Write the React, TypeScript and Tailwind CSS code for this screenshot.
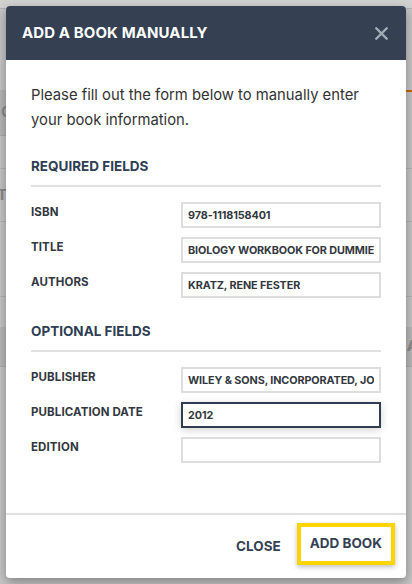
import { X } from 'lucide-react';

const required = [
  { label: 'ISBN', value: '978-1118158401' },
  { label: 'TITLE', value: 'BIOLOGY WORKBOOK FOR DUMMIES' },
  { label: 'AUTHORS', value: 'KRATZ, RENE FESTER' },
];

const optional = [
  { label: 'PUBLISHER', value: 'WILEY & SONS, INCORPORATED, JOHN', focused: false },
  { label: 'PUBLICATION DATE', value: '2012', focused: true },
  { label: 'EDITION', value: '', focused: false },
];

function Field({ label, value, focused }: { label: string; value: string; focused?: boolean }) {
  return (
    <div className="flex items-center h-[26px]">
      <label className="w-[150px] shrink-0 -mt-[4px] text-[11.5px] font-bold text-[#333840] tracking-[0.1px]">{label}</label>
      <input
        readOnly
        value={value}
        className={`w-[200px] h-[26px] px-[5px] text-[10.8px] font-bold text-[#333840] tracking-[-0.1px] bg-white outline-none border-2 ${
          focused ? 'border-[#2f3d52] shadow-[0_2px_8px_rgba(0,0,0,0.18)]' : 'border-[#dddddd]'
        }`}
      />
    </div>
  );
}

function Section({ title }: { title: string }) {
  return (
    <div className="pb-[9px] border-b-2 border-[#e0e0e0]">
      <h3 className="text-[13.5px] font-bold text-[#2f3d52] leading-[20px]">{title}</h3>
    </div>
  );
}

export default function App() {
  return (
    <div className="relative w-[412px] h-[584px] overflow-hidden bg-[#c6c6c6] font-['Inter',sans-serif]">
      {/* dimmed page behind the modal */}
      <div className="flex flex-col text-[#8a8a8a] font-bold text-[15px]">
        <div className="h-[9px] bg-[#d2d2d2] border-b border-[#b4b4b4]" />
        <div className="h-[81px]" />
        <div className="flex h-[46px]">
          <div className="w-[200px] bg-[#b8b8b8] border-b border-[#aeaeae] flex items-center pl-[1px]">C</div>
          <div className="flex-1 border-t-2 border-[#c46a00]" />
        </div>
        <div className="h-[33px] border-b border-[#b4b4b4]" />
        <div className="h-[53px] border-b border-[#b4b4b4] flex items-center -ml-[3px]">T</div>
        <div className="h-[75px] border-b border-[#b4b4b4]" />
        <div className="h-[30px]" />
        <div className="h-[40px] bg-[#b9b9b9] border-b border-[#aeaeae] flex items-center justify-end pr-0 -mr-[6px]">A</div>
      </div>

      {/* modal */}
      <div className="absolute left-[6px] top-[6px] w-[400px] h-[572px] flex flex-col bg-white rounded-[4px] overflow-hidden shadow-[0_4px_12px_rgba(0,0,0,0.35)]">
        <div className="h-[54px] shrink-0 bg-[#354153] flex items-center justify-between pl-[16px] pr-[14px]">
          <h2 className="text-[15px] font-bold text-white tracking-[0.1px]">ADD A BOOK MANUALLY</h2>
          <X className="w-[21px] h-[21px] text-[#a4acb8]" strokeWidth={2.8} />
        </div>

        <div className="flex-1 px-[25px] pt-[23px]">
          <p className="text-[14.8px] leading-[25px] text-[#333333]">
            Please fill out the form below to manually enter your book information.
          </p>

          <div className="mt-[23px]">
            <Section title="REQUIRED FIELDS" />
          </div>
          <div className="mt-[15px] flex flex-col gap-[9px]">
            {required.map((f) => (
              <Field key={f.label} label={f.label} value={f.value} />
            ))}
          </div>

          <div className="mt-[23px]">
            <Section title="OPTIONAL FIELDS" />
          </div>
          <div className="mt-[15px] flex flex-col gap-[9px]">
            {optional.map((f) => (
              <Field key={f.label} label={f.label} value={f.value} focused={f.focused} />
            ))}
          </div>
        </div>

        <div className="h-[65px] shrink-0 border-t-2 border-[#e0e0e0] flex items-center justify-end gap-[16px] pr-[11px] pb-[6px]">
          <button className="text-[13.5px] font-bold text-[#354153] mt-[6px]">CLOSE</button>
          <button className="h-[42px] px-[9px] border-[4px] border-[#fcd500] text-[13.5px] font-bold text-[#354153] shadow-[0_2px_5px_rgba(0,0,0,0.25)]">
            ADD BOOK
          </button>
        </div>
      </div>
    </div>
  );
}
